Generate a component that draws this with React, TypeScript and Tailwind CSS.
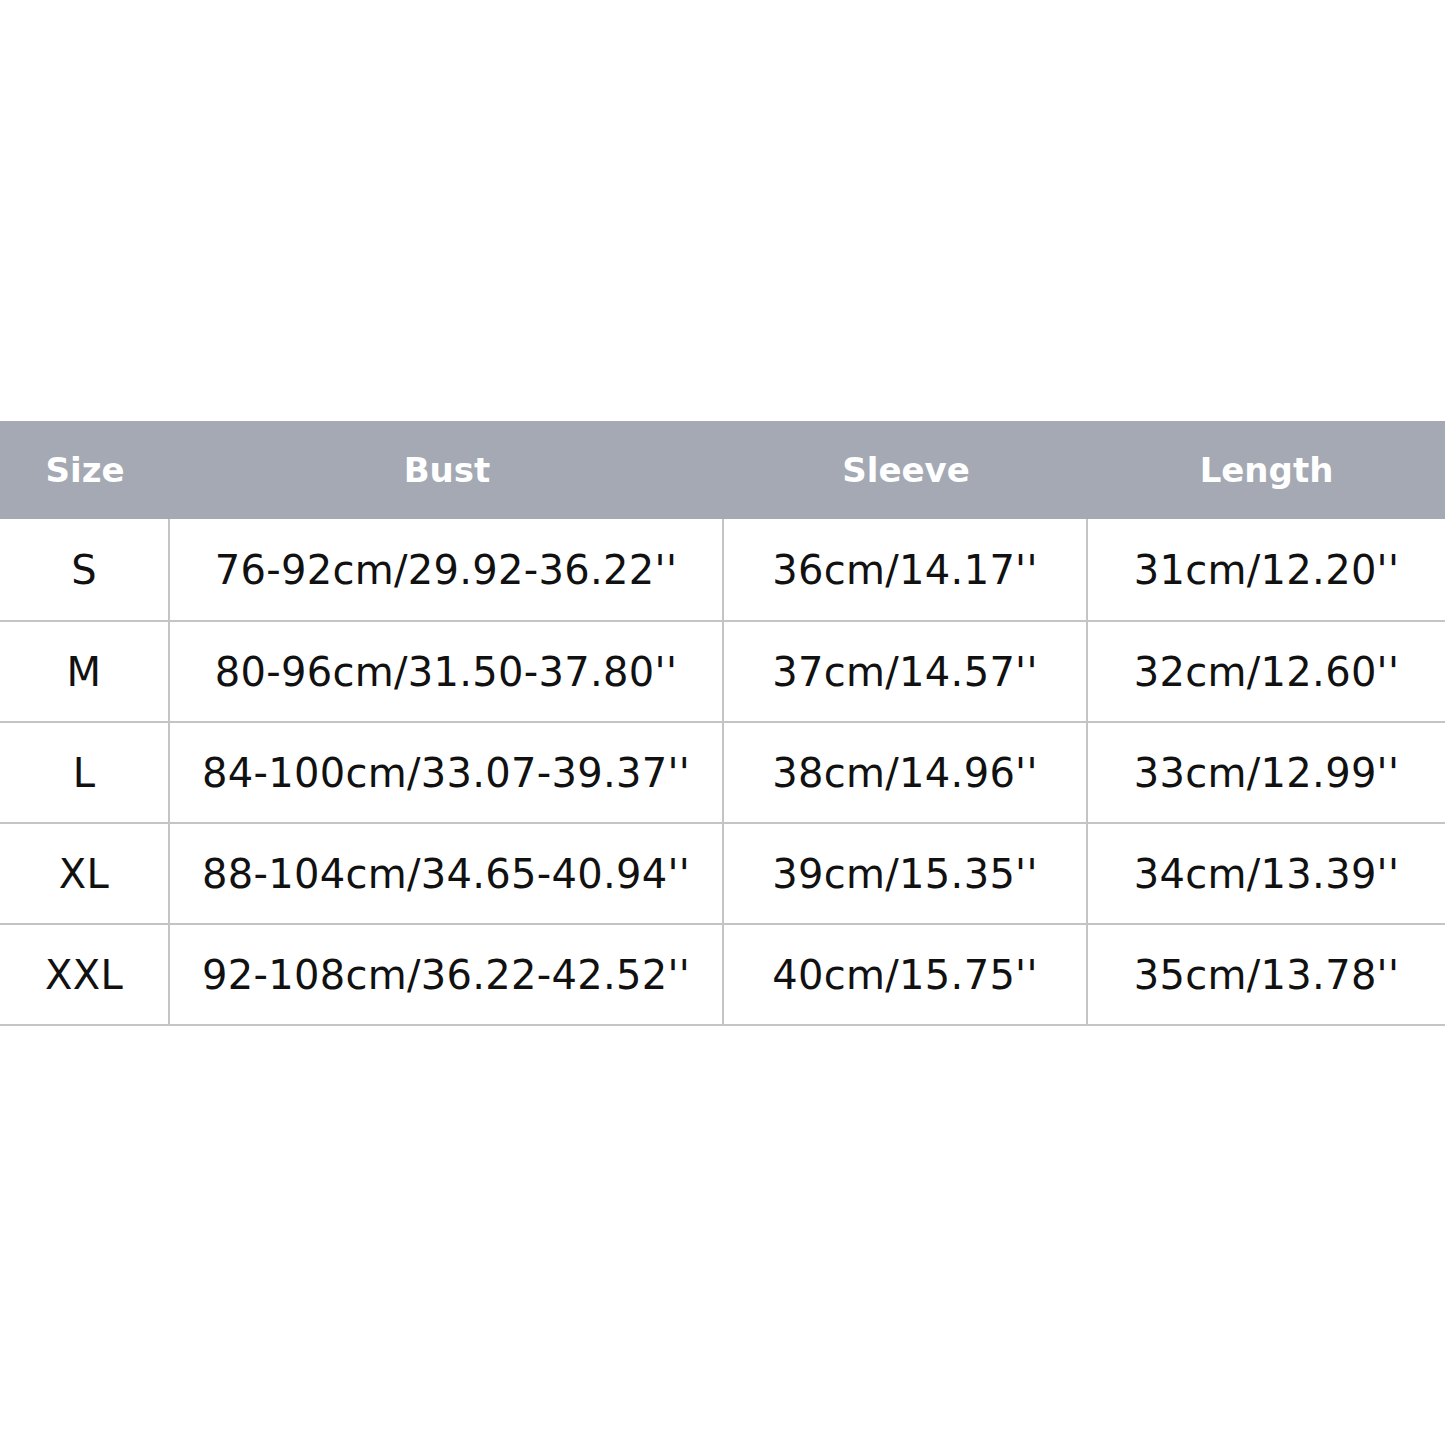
const headers = ["Size", "Bust", "Sleeve", "Length"];

const rows = [
  ["S", "76-92cm/29.92-36.22''", "36cm/14.17''", "31cm/12.20''"],
  ["M", "80-96cm/31.50-37.80''", "37cm/14.57''", "32cm/12.60''"],
  ["L", "84-100cm/33.07-39.37''", "38cm/14.96''", "33cm/12.99''"],
  ["XL", "88-104cm/34.65-40.94''", "39cm/15.35''", "34cm/13.39''"],
  ["XXL", "92-108cm/36.22-42.52''", "40cm/15.75''", "35cm/13.78''"],
];

const cols = "grid grid-cols-[170px_554px_364px_1fr]";

export default function App() {
  return (
    <div className="flex h-[1445px] w-[1445px] flex-col bg-white pt-[421px] font-['DejaVu_Sans',sans-serif]">
      <div className={`${cols} h-[98px] bg-[#a4a9b3]`}>
        {headers.map((h) => (
          <div
            key={h}
            className="flex items-center justify-center text-[34px] font-bold text-white"
          >
            {h}
          </div>
        ))}
      </div>
      {rows.map((r, ri) => (
        <div
          key={r[0]}
          className={`${cols} ${ri === 0 ? "h-[103px] pt-[2px]" : "h-[101px]"} border-b-2 border-[#c4c4c4]`}
        >
          {r.map((c, i) => (
            <div
              key={i}
              className={`flex items-center justify-center text-[40px] tracking-[0.3px] text-[#111] ${
                i < 3 ? "border-r-2 border-[#c4c4c4]" : ""
              } ${ri === 0 ? "-mt-[2px]" : ""}`}
            >
              {c}
            </div>
          ))}
        </div>
      ))}
    </div>
  );
}
